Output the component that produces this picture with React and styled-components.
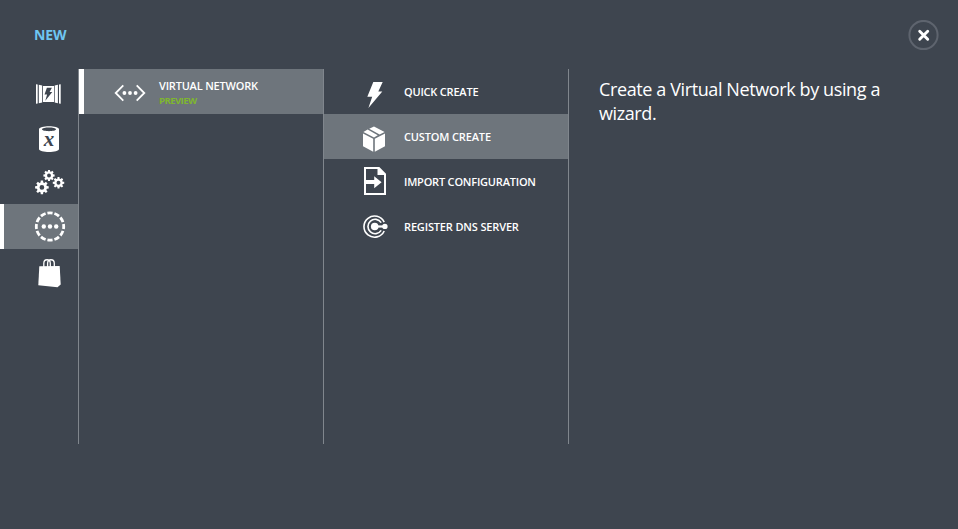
import React from "react";
import styled, { createGlobalStyle } from "styled-components";

const Global = createGlobalStyle`
  *, *::before, *::after { box-sizing: border-box; }
  body { margin: 0; background: #3e454f; overflow: hidden; }
  button { font: inherit; color: inherit; background: none; border: 0; padding: 0; text-align: left; }
  ul { list-style: none; margin: 0; padding: 0; }
`;

const Drawer = styled.main`
  display: flex;
  flex-direction: column;
  width: 958px;
  height: 529px;
  background: #3e454f;
  color: #fff;
  font-family: "Open Sans", "Noto Sans", sans-serif;
`;

const Header = styled.header`
  display: flex;
  justify-content: space-between;
  align-items: center;
  flex: none;
  height: 69px;
  padding: 1px 19px 0 34px;
`;

const Title = styled.h1`
  margin: 0;
  font-size: 14px;
  line-height: 20px;
  font-weight: 700;
  letter-spacing: -0.1px;
  color: #6fc6f2;
`;

const CloseButton = styled.button`
  display: flex;
  width: 31px;
  height: 31px;
`;

const Columns = styled.div`
  display: grid;
  grid-template-columns: 79px 245px 245px 1fr;
  height: 375px;
`;

const Column = styled.ul`
  border-right: 1px solid #80868d;
`;

const Item = styled.button`
  display: flex;
  width: 100%;
  height: 45px;
  background: ${(p) => (p.$active ? "#6e757c" : "transparent")};
  border-left: ${(p) => p.$bar || 0}px solid #fff;
  padding-left: ${(p) => p.$indent - (p.$bar || 0)}px;
`;

const Icon = styled.svg`
  display: block;
  flex: none;
  fill: #fff;
`;

const Variable = styled.text`
  font: italic 700 21px "Liberation Serif", serif;
  fill: #3e454f;
`;

const Texts = styled.span`
  display: flex;
  flex-direction: column;
  padding: ${(p) => p.$top}px 0 0 ${(p) => p.$gap}px;
`;

const Label = styled.span`
  font-size: 11px;
  font-weight: 600;
  line-height: 15px;
  white-space: nowrap;
  letter-spacing: ${(p) => p.$track}px;
`;

const Badge = styled.span`
  font-size: 9.5px;
  line-height: 15px;
  font-weight: 700;
  letter-spacing: -0.55px;
  color: #7fb62f;
`;

const Description = styled.p`
  margin: 0;
  padding: 8px 50px 0 30px;
  font-size: 18px;
  line-height: 24px;
  letter-spacing: -0.39px;
`;

const gearPath = (cx, cy, r) => {
  const points = [];
  for (let i = 0; i < 8; i++) {
    const a = (i * Math.PI) / 4;
    [[-0.27, 0.74], [-0.17, 1], [0.17, 1], [0.27, 0.74]].forEach(([d, k]) => {
      points.push(`${(cx + Math.cos(a + d) * r * k).toFixed(2)} ${(cy + Math.sin(a + d) * r * k).toFixed(2)}`);
    });
  }
  const h = r * 0.34;
  return `M${points.join("L")}Z M${cx - h} ${cy}a${h} ${h} 0 1 0 ${2 * h} 0a${h} ${h} 0 1 0 ${-2 * h} 0Z`;
};

const ComputeIcon = () => (
  <Icon width="32" height="45" viewBox="0 0 32 45">
    <path d="M2 15.3l1.7.3v18.8l-1.7.3zM4.8 15.8l3.4.7v17l-3.4.7zM26.7 15.3l-1.7.3v18.8l1.7.3zM23.9 15.8l-3.2.7v17l3.2.7z" />
    <path fillRule="evenodd" d="M9 17h11v16H9zM12.9 18.8l-2.4 6.6h2.6l-1.8 6.4 7-8.8h-2.7l2.3-4.2z" />
  </Icon>
);

const DataIcon = () => (
  <Icon width="32" height="45" viewBox="0 0 32 45">
    <path fillRule="evenodd" d="M5 15.3C5 11.2 25 11.2 25 15.3V35C25 39 5 39 5 35zM8 15.3c0 2.5 14 2.5 14 0s-14-2.5-14 0z" />
    <Variable x="15" y="31.5" textAnchor="middle">x</Variable>
  </Icon>
);

const ServicesIcon = () => (
  <Icon width="32" height="45" viewBox="0 0 32 45">
    <path fillRule="evenodd" d={gearPath(15, 16.5, 5.7)} />
    <path fillRule="evenodd" d={gearPath(7.9, 28.4, 6.9)} />
    <path fillRule="evenodd" d={gearPath(24.5, 23.8, 5.8)} />
  </Icon>
);

const NetworksIcon = () => (
  <Icon width="32" height="45" viewBox="0 0 32 45">
    <circle cx="16" cy="22.5" r="13.7" fill="none" stroke="#fff" strokeWidth="2.8" pathLength="120" strokeDasharray="7.4 2.6" strokeDashoffset="3.7" />
    <circle cx="9.8" cy="22.5" r="2.2" />
    <circle cx="16" cy="22.5" r="2.2" />
    <circle cx="22.2" cy="22.5" r="2.2" />
  </Icon>
);

const StoreIcon = () => (
  <Icon width="32" height="45" viewBox="0 0 32 45">
    <path d="M5.3 17.3l20.4-.2 1 18.5-3.2 2.6-19.2-2z" />
    <path d="M9.8 18v-3.5c0-5 6.5-5 6.5 0V18M13.6 18v-3.5c0-5 6.7-5 6.7 0V18" fill="none" stroke="#fff" strokeWidth="1.3" />
  </Icon>
);

const VirtualNetworkIcon = () => (
  <Icon width="32" height="45" viewBox="0 0 32 45">
    <path d="M9.3 16.3L1.7 24l7.6 7.7M22.7 16.3l7.6 7.7-7.6 7.7" fill="none" stroke="#fff" strokeWidth="1.8" />
    <circle cx="10.4" cy="24" r="1.9" />
    <circle cx="16" cy="24" r="1.9" />
    <circle cx="21.6" cy="24" r="1.9" />
  </Icon>
);

const BoltIcon = () => (
  <Icon width="28" height="45" viewBox="0 0 28 45">
    <path d="M11.3 13H20.7L16.3 22.5H20.3L6.4 39L10.2 27.7H5.3z" />
  </Icon>
);

const BoxIcon = () => (
  <Icon width="28" height="45" viewBox="0 0 28 45">
    <path d="M1 19.4l10.2 5.4v13L1 32.3zM23 19.4l-10.2 5.4v13L23 32.3zM1.4 18l4.2-2.4 10.2 5.6-3.8 2.2zM7.2 14.7l4.8-2.3 10.6 5.5-5 2.5z" />
  </Icon>
);

const ImportIcon = () => (
  <Icon width="28" height="45" viewBox="0 0 28 45">
    <path fillRule="evenodd" d="M2 8h15.3l6.7 6.8V36H2zM4 10v24h18V16h-6.5v-6z" />
    <path d="M3 21h9.2v-3.8l7.4 6-7.4 6V25H3z" />
  </Icon>
);

const DnsIcon = () => (
  <Icon width="28" height="45" viewBox="0 0 28 45">
    <g fill="none" stroke="#fff">
      <path d="M22.2 18.2a10.6 10.6 0 1 0 0 8.8" strokeWidth="1.6" />
      <path d="M19.2 18.6a7.2 7.2 0 1 0 0 7.8" strokeWidth="1.6" />
      <path d="M12.5 22.5H23" strokeWidth="2.2" />
    </g>
    <circle cx="12.7" cy="22.5" r="3.8" />
    <circle cx="22.9" cy="22.4" r="2.7" />
  </Icon>
);

const categories = [
  { name: "Compute", Glyph: ComputeIcon },
  { name: "Data services", Glyph: DataIcon },
  { name: "App services", Glyph: ServicesIcon },
  { name: "Networks", Glyph: NetworksIcon, active: true },
  { name: "Store", Glyph: StoreIcon },
];

const actions = [
  { label: "QUICK CREATE", Glyph: BoltIcon, track: -0.2 },
  { label: "CUSTOM CREATE", Glyph: BoxIcon, active: true, track: -0.15 },
  { label: "IMPORT CONFIGURATION", Glyph: ImportIcon, track: -0.2 },
  { label: "REGISTER DNS SERVER", Glyph: DnsIcon, track: -0.15 },
];

export default function App() {
  return (
    <Drawer>
      <Global />
      <Header>
        <Title>NEW</Title>
        <CloseButton aria-label="Close">
          <Icon width="31" height="31" viewBox="0 0 31 31">
            <circle cx="15.5" cy="15" r="14.1" fill="none" stroke="#5e646e" strokeWidth="2" />
            <path d="M11.7 11.2l8 8M19.7 11.2l-8 8" stroke="#fff" strokeWidth="2.9" strokeLinecap="round" />
          </Icon>
        </CloseButton>
      </Header>
      <Columns>
        <Column>
          {categories.map(({ name, Glyph, active }) => (
            <li key={name}>
              <Item aria-label={name} $active={active} $bar={active ? 4 : 0} $indent={34}>
                <Glyph />
              </Item>
            </li>
          ))}
        </Column>
        <Column>
          <li>
            <Item $active $bar={5} $indent={35}>
              <VirtualNetworkIcon />
              <Texts $top={9} $gap={13}>
                <Label $track={-0.2}>VIRTUAL NETWORK</Label>
                <Badge>PREVIEW</Badge>
              </Texts>
            </Item>
          </li>
        </Column>
        <Column>
          {actions.map(({ label, Glyph, active, track }) => (
            <li key={label}>
              <Item $active={active} $indent={38}>
                <Glyph />
                <Texts $top={15} $gap={14}>
                  <Label $track={track}>{label}</Label>
                </Texts>
              </Item>
            </li>
          ))}
        </Column>
        <Description>Create a Virtual Network by using a wizard.</Description>
      </Columns>
    </Drawer>
  );
}
